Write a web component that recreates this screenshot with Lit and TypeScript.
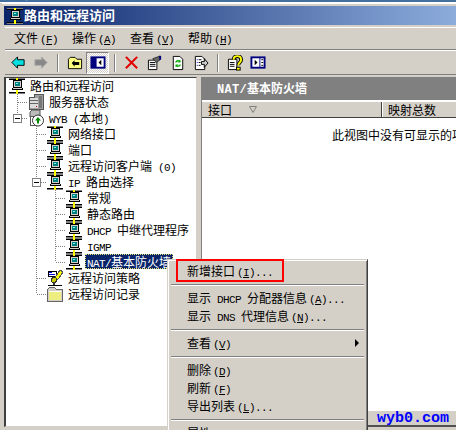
import { LitElement, html, css, svg } from "lit";
import { customElement } from "lit/decorators.js";

const text = (s: string) =>
  (s.match(/[\x00-\x7f]+|[^\x00-\x7f]+/g) || []).map((p) =>
    /^[\x00-\x7f]/.test(p) ? html`<span class="lat">${p}</span>` : p
  );

const computer = html`<svg class="ic" width="18" height="16" viewBox="0 1 18 16" shape-rendering="crispEdges">
  <rect x="1" y="1" width="16" height="1" fill="#808080"/><rect x="1" y="2" width="16" height="1" fill="#000"/><rect x="8" y="1" width="2" height="3" fill="#ff0"/>
  <rect x="5" y="3" width="9" height="8" fill="#000"/><rect x="6" y="4" width="7" height="6" fill="#d4d0c8"/><rect x="7" y="5" width="5" height="4" fill="#008080"/><rect x="8" y="6" width="2" height="1" fill="#7fe"/>
  <rect x="4" y="11" width="11" height="2" fill="#000"/><rect x="5" y="11" width="9" height="1" fill="#d4d0c8"/>
  <rect x="1" y="15" width="16" height="1" fill="#000"/><rect x="1" y="16" width="16" height="1" fill="#808080"/><rect x="8" y="13" width="2" height="4" fill="#ff0"/>
</svg>`;
const server = html`<svg class="ic" width="18" height="16" viewBox="0 1 18 16" shape-rendering="crispEdges">
  <path d="M7 1h9v15H2V4h5z" fill="#a0a0a0" stroke="#555"/><rect x="3" y="5" width="8" height="10" fill="#dcdcdc"/>
  <rect x="3" y="7" width="8" height="1" fill="#666"/><rect x="3" y="10" width="8" height="1" fill="#666"/><rect x="12" y="3" width="3" height="12" fill="#777"/><rect x="9" y="13" width="1" height="1" fill="#c00"/>
</svg>`;
const wyb = html`<svg class="ic" width="18" height="16" viewBox="0 1 18 16">
  <path d="M5 1h8v7H3V3z" fill="#bbb" stroke="#555"/><rect x="3.500" y="7.500" width="5" height="9" fill="#fff" stroke="#555"/>
  <circle cx="11" cy="11.500" r="5.500" fill="#fff" stroke="#333"/><path d="M11 8l3 3.500h-2v3h-2v-3H8z" fill="#080"/>
</svg>`;
const policy = html`<svg class="ic" width="18" height="16" viewBox="0 1 18 16" shape-rendering="crispEdges">
  <rect x="2" y="2" width="8" height="5" fill="#fff" stroke="#000"/><rect x="3" y="3" width="3" height="1" fill="#00c"/><rect x="3" y="5" width="6" height="1" fill="#00c"/>
  <path d="M14 1l3 2-4 6-3 3-2-2 2-3z" fill="#ff0" stroke="#555"/><circle cx="8" cy="11" r="2.500" fill="#cc0" stroke="#333"/>
  <rect x="2" y="16" width="14" height="1" fill="#000"/><rect x="7" y="13" width="2" height="3" fill="#333"/>
</svg>`;
const folder = html`<svg class="ic" width="18" height="16" viewBox="0 1 18 16" shape-rendering="crispEdges">
  <path d="M1.500 4.500l2-2h5l2 2h6v12h-15z" fill="#d4d0c8" stroke="#666"/>
  <rect x="3" y="6" width="12" height="9" fill="#eeee80"/><rect x="3" y="6" width="12" height="1" fill="#fff"/>
</svg>`;

const tb = {
  back: svg`<path d="M2 8l6-6v3h7v6H8v3z" fill="#00e0e0" stroke="#000"/>`,
  fwd: svg`<path d="M15 8L9 2v3H2v6h7v3z" fill="#888" stroke="#aaa"/>`,
  up: svg`<path d="M1.500 4.500l2-2h5l2 2h5v10h-14z" fill="#ffff80" stroke="#000"/><path d="M5 9l3-3v2h5v3H8v2z" fill="#000" transform="translate(0 -.5)"/>`,
  pane: svg`<rect x="1.500" y="2.500" width="14" height="11" fill="#fff" stroke="#00007f" stroke-width="2"/><rect x="2" y="3" width="5" height="10" fill="#00007f"/><path d="M12 5v6L9 8z" fill="#000"/>`,
  del: svg`<path d="M2 2l12 12M14 2L2 14" stroke="#e00000" stroke-width="2.200" fill="none"/>`,
  prop: svg`<path d="M1.500 5.500h9v10h-9z" fill="#fff" stroke="#000"/><path d="M3 8h6M3 10h6M3 12h6" stroke="#000"/><path d="M6 4l8-3v4l-4 3z" fill="#666" stroke="#333"/><rect x="13" y="1" width="2" height="4" fill="#00007f"/>`,
  ref: svg`<path d="M3.500 1.500h7l3 3v11h-10z" fill="#fff" stroke="#000"/><path d="M6 8a3 3 0 0 1 5-1M11 10a3 3 0 0 1-5 1" stroke="#0a0" stroke-width="1.400" fill="none"/><path d="M11 5v3H8zM6 13v-3h3z" fill="#0a0"/>`,
  exp: svg`<path d="M2.500 1.500h7l3 3v11h-10z" fill="#fff" stroke="#000"/><path d="M4 5h1M4 8h1M4 11h1" stroke="#00c"/><path d="M6 5h3M6 8h2M6 11h2" stroke="#000"/><path d="M9 7h3V4l4 4.500-4 4.500v-3H9z" fill="#ccc" stroke="#000"/>`,
  help: svg`<path d="M1.500 4.500h9v11h-9z" fill="#fff" stroke="#000"/><path d="M3 8h5M3 10h5M3 12h5" stroke="#000"/><path d="M7 5c0-5 8-5 8 0 0 3-3 3-3 6" fill="none" stroke="#000" stroke-width="4"/><path d="M7 5c0-5 8-5 8 0 0 3-3 3-3 6" fill="none" stroke="#ff0" stroke-width="2"/><rect x="10" y="13" width="4" height="3" fill="#ff0" stroke="#000"/>`,
  mmc: svg`<rect x="1.500" y="2.500" width="14" height="11" fill="#fff" stroke="#00007f" stroke-width="2"/><rect x="10" y="3" width="1" height="10" fill="#00007f"/><path d="M5 5v6l3-3z" fill="#000"/><path d="M12 5h2M12 8h2M12 11h2" stroke="#000"/>`,
};
const tbi = (c: any) => html`<svg width="16" height="16" viewBox="0 0 17 17">${c}</svg>`;

type Cell = "e" | "v" | "t" | "l" | "m";
const guide = (c: Cell, w: number) => {
  const mid = 9;
  return html`<svg class="g" width=${w} height="16" viewBox="0 0 ${w} 16" shape-rendering="crispEdges">
    ${c === "v" || c === "t" ? svg`<path d="M${mid}.5 0V16" stroke="#808080" stroke-dasharray="1 1"/>` : ""}
    ${c === "l" ? svg`<path d="M${mid}.5 0V8" stroke="#808080" stroke-dasharray="1 1"/>` : ""}
    ${c === "t" || c === "l" ? svg`<path d="M${mid + 1} 8.500H${w}" stroke="#808080" stroke-dasharray="1 1"/>` : ""}
    ${c === "m"
      ? svg`<path d="M${mid}.5 0V3" stroke="#808080" stroke-dasharray="1 1"/><path d="M${mid + 5} 8.500H${w}" stroke="#808080" stroke-dasharray="1 1"/>
        <rect x=${mid - 4 + 0.5} y="4.500" width="8" height="8" fill="#fff" stroke="#808080"/><path d="M${mid - 2} 8.500h5" stroke="#000"/>`
      : ""}
  </svg>`;
};

const rows: [Cell[], any, string, boolean?][] = [
  [[], computer, "路由和远程访问"],
  [["t"], server, "服务器状态"],
  [["m"], wyb, "WYB (本地)"],
  [["e", "t"], computer, "网络接口"],
  [["e", "t"], computer, "端口"],
  [["e", "t"], computer, "远程访问客户端 (0)"],
  [["e", "m"], computer, "IP 路由选择"],
  [["e", "v", "t"], computer, "常规"],
  [["e", "v", "t"], computer, "静态路由"],
  [["e", "v", "t"], computer, "DHCP 中继代理程序"],
  [["e", "v", "t"], computer, "IGMP"],
  [["e", "v", "l"], computer, "NAT/基本防火墙", true],
  [["e", "t"], policy, "远程访问策略"],
  [["e", "l"], folder, "远程访问记录"],
];
const W = [19, 19, 19];

@customElement("app-root")
export class AppRoot extends LitElement {
  static styles = css`
    :host { display: block; width: 456px; height: 430px; overflow: hidden; }
    .win { position: relative; width: 456px; height: 430px; overflow: hidden; background: #d4d0c8; display: flex; flex-direction: column;
      font: 12px/16px "Noto Sans CJK SC", sans-serif; color: #000; }
    .lat { font-family: "Liberation Mono", monospace; font-size: 11px; letter-spacing: -0.6px; }
    .s1 { height: 2px; flex: none; background: #44709f; display: flex; align-items: flex-end; padding-left: 20px; overflow: hidden; color: #fff; line-height: 16px; }
    .s1 span { flex: none; height: 16px; }
    .s2 { height: 1px; flex: none; background: #fff; }
    .s3 { height: 2px; flex: none; background: #d4d0c8; margin-left: 2px; border-top: 1px solid #fff; box-sizing: border-box; }
    .title { height: 19px; flex: none; margin: 1px 0 0 4px; display: flex; align-items: center; padding-left: 2px;
      background: linear-gradient(90deg, #0a246a, #8cacdc); color: #fff; font-size: 13px; font-weight: bold; line-height: 17px; }
    .title .ic { margin-right: 0; }
    .title span { margin-bottom: 2px; }
    .menu { flex: none; margin: 2px 0 0 5px; border-top: 1px solid #fff; border-bottom: 1px solid #808080; box-sizing: border-box; height: 23px;
      display: flex; align-items: center; padding: 1px 0 0 9px; }
    .menu span.m { width: 58px; white-space: nowrap; }
    .menu .lat { margin-left: 2px; }
    .tools { height: 25px; flex: none; margin: 0 0 0 5px; border-top: 1px solid #fff; border-bottom: 1px solid #808080; box-sizing: border-box;
      display: flex; align-items: center; padding-left: 1px; }
    .tb { width: 23px; height: 22px; display: flex; align-items: center; justify-content: center; flex: none; box-sizing: border-box; }
    .tb.on { background: repeating-conic-gradient(#fff 0 25%, #d4d0c8 0 50%) 0 0 / 2px 2px; border: 1px solid; border-color: #808080 #fff #fff #808080; }
    .sep { width: 0; height: 18px; border-left: 1px solid #808080; border-right: 1px solid #fff; margin: 0 4px 0 5px; flex: none; }
    .main { flex: none; height: 350px; display: flex; margin: 2px 0 0 4px; }
    .tree { width: 193px; height: 350px; box-sizing: border-box; background: #fff; border: 1px solid; border-color: #404040 #d4d0c8 #d4d0c8 #404040; border-width: 1px 1px 1px 2px; overflow: hidden; flex: none; padding-left: 2px; }
    .row { height: 16px; display: flex; align-items: center; white-space: nowrap; }
    .g { flex: none; display: block; }
    .ic { flex: none; margin-right: 1px; overflow: visible; }
    .lbl { padding: 0 2px; line-height: 15px; height: 15px; margin-left: 1px; margin-bottom: 1px; }
    .lbl.sel { background: #0a246a; color: #fff; outline: 1px dotted #e8e070; outline-offset: -1px; }
    .rp { margin-left: 4px; flex: 1; min-width: 0; overflow: hidden; border-left: 1px solid #808080; display: flex; flex-direction: column; background: #fff; }
    .rh { height: 23px; flex: none; background: #808080; color: #fff; font-weight: bold; line-height: 22px; padding-left: 15px; white-space: nowrap; }
    .rh .lat { font-size: 12px; font-weight: bold; letter-spacing: 0.3px; }
    .gapb { height: 2px; flex: none; background: #fff; }
    .ch { height: 16px; flex: none; background: #d4d0c8; display: flex; border-bottom: 1px solid #404040; box-sizing: border-box; }
    .c1 { width: 180px; flex: none; padding-left: 6px; box-sizing: border-box; border-right: 1px solid #404040; display: flex; align-items: center; gap: 17px; }
    .c1 svg { flex: none; }
    .c2 { padding-left: 5px; border-left: 1px solid #fff; white-space: nowrap; }
    .empty { padding: 9px 0 0 130px; white-space: nowrap; }
    .ctx { position: absolute; left: 167px; top: 259px; width: 201px; height: 190px; box-sizing: border-box; background: #d4d0c8; padding: 2px 3px 0;
      border: 1px solid; border-color: #d4d0c8 #404040 #404040 #d4d0c8; box-shadow: inset 1px 1px #fff, inset -1px -1px #808080; }
    .it { height: 18px; line-height: 17px; padding-left: 16px; position: relative; white-space: nowrap; }
    .it .k { margin-left: 2px; letter-spacing: -0.6px; }
    .hr { height: 9px; display: flex; align-items: center; }
    .hr::before { content: ""; display: block; width: 100%; height: 0; border-top: 1px solid #808080; border-bottom: 1px solid #fff; }
    .arrow { position: absolute; right: 5px; top: 5px; width: 0; height: 0; border-left: 4px solid #000; border-top: 4px solid transparent; border-bottom: 4px solid transparent; }
    .red { position: absolute; left: 8px; top: -1px; width: 108px; height: 23px; box-sizing: border-box; border: 2px solid #f00; }
    .wm { position: absolute; left: 368px; top: 410px; width: 88px; height: 17px; box-sizing: border-box; background: #d4d0c8; border-top: 1px solid #fff; border-bottom: 2px solid #505050;
      color: #00f; font: bold 15px/16px "Liberation Mono", monospace; padding-left: 9px; white-space: nowrap; overflow: hidden; }
    u { text-decoration: underline; }
  `;

  render() {
    const k = (letter: string, rest = "") => html`<span class="lat k">(<u>${letter}</u>)${rest}</span>`;
    return html`<div class="win">
      <div class="s1"><span>路由和</span></div>
      <div class="s2"></div>
      <div class="s3"></div>
      <div class="title">${computer}<span>路由和远程访问</span></div>
      <div class="menu">
        <span class="m">文件<span class="lat">(<u>F</u>)</span></span>
        <span class="m">操作<span class="lat">(<u>A</u>)</span></span>
        <span class="m">查看<span class="lat">(<u>V</u>)</span></span>
        <span class="m">帮助<span class="lat">(<u>H</u>)</span></span>
      </div>
      <div class="tools">
        <div class="tb">${tbi(tb.back)}</div>
        <div class="tb">${tbi(tb.fwd)}</div>
        <div class="sep"></div>
        <div class="tb">${tbi(tb.up)}</div>
        <div class="tb on">${tbi(tb.pane)}</div>
        <div class="sep"></div>
        <div class="tb">${tbi(tb.del)}</div>
        <div class="tb">${tbi(tb.prop)}</div>
        <div class="tb">${tbi(tb.ref)}</div>
        <div class="tb">${tbi(tb.exp)}</div>
        <div class="sep"></div>
        <div class="tb">${tbi(tb.help)}</div>
        <div class="tb">${tbi(tb.mmc)}</div>
      </div>
      <div class="main">
        <div class="tree">
          ${rows.map(
            ([cells, icon, label, sel]) => html`<div class="row">
              ${cells.map((c, i) => guide(c, W[i]))}${icon}<span class="lbl ${sel ? "sel" : ""}">${text(label)}</span>
            </div>`
          )}
        </div>
        <div class="rp">
          <div class="rh">${text("NAT/基本防火墙")}</div>
          <div class="gapb"></div>
          <div class="ch">
            <div class="c1">接口<svg width="8" height="7" viewBox="0 0 8 7"><path d="M.5.500h7L4 6.500z" fill="#d4d0c8" stroke="#808080"/></svg></div>
            <div class="c2">映射总数</div>
          </div>
          <div class="empty">此视图中没有可显示的项目。</div>
        </div>
      </div>
      <div class="ctx">
        <div class="it">新增接口${k("I", "...")}</div>
        <div class="hr"></div>
        <div class="it">${text("显示 DHCP 分配器信息")}${k("A", "...")}</div>
        <div class="it">${text("显示 DNS 代理信息")}${k("N", "...")}</div>
        <div class="hr"></div>
        <div class="it">查看${k("V")}<span class="arrow"></span></div>
        <div class="hr"></div>
        <div class="it">删除${k("D")}</div>
        <div class="it">刷新${k("F")}</div>
        <div class="it">导出列表${k("L", "...")}</div>
        <div class="hr"></div>
        <div class="it">属性${k("R")}</div>
        <div class="red"></div>
      </div>
      <div class="wm">wyb0.com</div>
    </div>`;
  }
}
